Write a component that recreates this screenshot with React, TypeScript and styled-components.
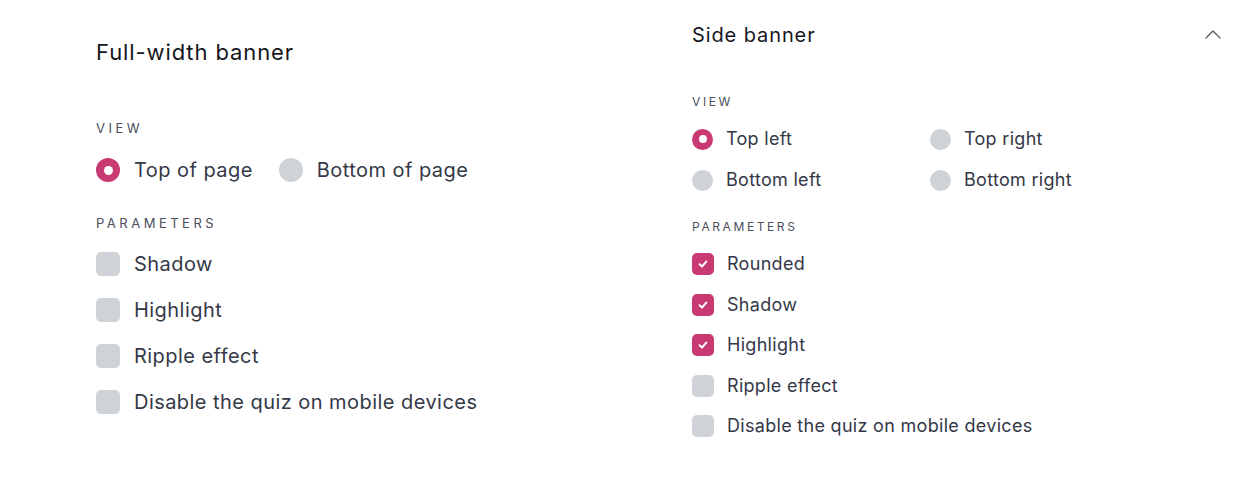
import React from "react";
import styled, { createGlobalStyle } from "styled-components";

const PINK = "#c93a72";
const GREY = "#cfd2d6";

const GlobalStyle = createGlobalStyle`
  body {
    margin: 0;
    background: #ffffff;
    font-family: Inter, "Noto Sans", sans-serif;
  }
`;

interface SizeProps {
  $size: "lg" | "sm";
}

const Page = styled.div`
  display: flex;
  width: 1240px;
  height: 478px;
  padding-left: 96px;
  box-sizing: border-box;
`;

const Column = styled.section<SizeProps>`
  display: flex;
  flex-direction: column;
  width: ${({ $size }) => ($size === "lg" ? "596px" : "auto")};
  flex: ${({ $size }) => ($size === "lg" ? "none" : "1")};
  padding-top: ${({ $size }) => ($size === "lg" ? "38px" : "22px")};
  padding-right: ${({ $size }) => ($size === "lg" ? "0" : "18px")};
`;

const Header = styled.div`
  display: flex;
  align-items: center;
  justify-content: space-between;
`;

const Title = styled.h2<SizeProps>`
  margin: 0;
  font-size: ${({ $size }) => ($size === "lg" ? "22px" : "20px")};
  line-height: ${({ $size }) => ($size === "lg" ? "28px" : "26px")};
  font-weight: 400;
  color: #16171c;
  letter-spacing: 0.9px;
`;

const Caption = styled.div<SizeProps & { $gap: number; $below: number }>`
  margin-top: ${({ $gap }) => `${$gap}px`};
  margin-bottom: ${({ $below }) => `${$below}px`};
  font-size: ${({ $size }) => ($size === "lg" ? "13px" : "12px")};
  line-height: ${({ $size }) => ($size === "lg" ? "16px" : "14px")};
  letter-spacing: ${({ $size }) => ($size === "lg" ? "3.5px" : "2.6px")};
  color: #4a4d5c;
  text-transform: uppercase;
`;

const RadioRow = styled.div`
  display: flex;
  align-items: center;
  gap: 26px;
`;

const RadioGrid = styled.div`
  display: grid;
  grid-template-columns: 238px 238px;
  row-gap: 19px;
`;

const List = styled.div<SizeProps>`
  display: flex;
  flex-direction: column;
  gap: ${({ $size }) => ($size === "lg" ? "22px" : "18.5px")};
`;

const Option = styled.label<SizeProps>`
  display: flex;
  align-items: center;
  gap: ${({ $size }) => ($size === "lg" ? "14px" : "13px")};
  font-size: ${({ $size }) => ($size === "lg" ? "20px" : "18px")};
  line-height: ${({ $size }) => ($size === "lg" ? "24px" : "22px")};
  letter-spacing: ${({ $size }) => ($size === "lg" ? "0.45px" : "0.3px")};
  color: #353847;
  cursor: pointer;
`;

const Dot = styled.span<SizeProps & { $on: boolean }>`
  flex: none;
  box-sizing: border-box;
  width: ${({ $size }) => ($size === "lg" ? "24px" : "21px")};
  height: ${({ $size }) => ($size === "lg" ? "24px" : "21px")};
  border-radius: 50%;
  background: ${({ $on }) => ($on ? PINK : GREY)};
  display: flex;
  align-items: center;
  justify-content: center;

  &::after {
    content: "";
    display: ${({ $on }) => ($on ? "block" : "none")};
    width: ${({ $size }) => ($size === "lg" ? "9px" : "8px")};
    height: ${({ $size }) => ($size === "lg" ? "9px" : "8px")};
    border-radius: 50%;
    background: #ffffff;
  }
`;

const Box = styled.span<SizeProps & { $on: boolean }>`
  flex: none;
  width: ${({ $size }) => ($size === "lg" ? "24px" : "22px")};
  height: ${({ $size }) => ($size === "lg" ? "24px" : "22px")};
  border-radius: 5px;
  background: ${({ $on }) => ($on ? PINK : GREY)};
  display: flex;
  align-items: center;
  justify-content: center;
`;

const Chevron = styled.svg`
  width: 18px;
  height: 18px;
  color: #5a5d68;
`;

type Size = "lg" | "sm";

const Radio = ({ size, on, label }: { size: Size; on?: boolean; label: string }) => (
  <Option $size={size}>
    <Dot $size={size} $on={!!on} />
    {label}
  </Option>
);

const Check = ({ size, on, label }: { size: Size; on?: boolean; label: string }) => (
  <Option $size={size}>
    <Box $size={size} $on={!!on}>
      {on && (
        <svg width="12" height="12" viewBox="0 0 12 12">
          <path
            d="M2.6 6.3 L5 8.5 L9.3 3.6"
            fill="none"
            stroke="#fff"
            strokeWidth="2"
            strokeLinecap="round"
            strokeLinejoin="round"
          />
        </svg>
      )}
    </Box>
    {label}
  </Option>
);

const App = () => {
  return (
    <>
      <GlobalStyle />
      <Page>
        <Column $size="lg">
          <Title $size="lg">Full-width banner</Title>
          <Caption $size="lg" $gap={54} $below={22}>
            View
          </Caption>
          <RadioRow>
            <Radio size="lg" on label="Top of page" />
            <Radio size="lg" label="Bottom of page" />
          </RadioRow>
          <Caption $size="lg" $gap={33} $below={21}>
            Parameters
          </Caption>
          <List $size="lg">
            <Check size="lg" label="Shadow" />
            <Check size="lg" label="Highlight" />
            <Check size="lg" label="Ripple effect" />
            <Check size="lg" label="Disable the quiz on mobile devices" />
          </List>
        </Column>

        <Column $size="sm">
          <Header>
            <Title $size="sm">Side banner</Title>
            <Chevron viewBox="0 0 18 18">
              <polyline
                points="2,12 9,5 16,12"
                fill="none"
                stroke="currentColor"
                strokeWidth="1.4"
                strokeLinecap="round"
                strokeLinejoin="round"
              />
            </Chevron>
          </Header>
          <Caption $size="sm" $gap={47} $below={19}>
            View
          </Caption>
          <RadioGrid>
            <Radio size="sm" on label="Top left" />
            <Radio size="sm" label="Top right" />
            <Radio size="sm" label="Bottom left" />
            <Radio size="sm" label="Bottom right" />
          </RadioGrid>
          <Caption $size="sm" $gap={29} $below={19}>
            Parameters
          </Caption>
          <List $size="sm">
            <Check size="sm" on label="Rounded" />
            <Check size="sm" on label="Shadow" />
            <Check size="sm" on label="Highlight" />
            <Check size="sm" label="Ripple effect" />
            <Check size="sm" label="Disable the quiz on mobile devices" />
          </List>
        </Column>
      </Page>
    </>
  );
};

export default App;
